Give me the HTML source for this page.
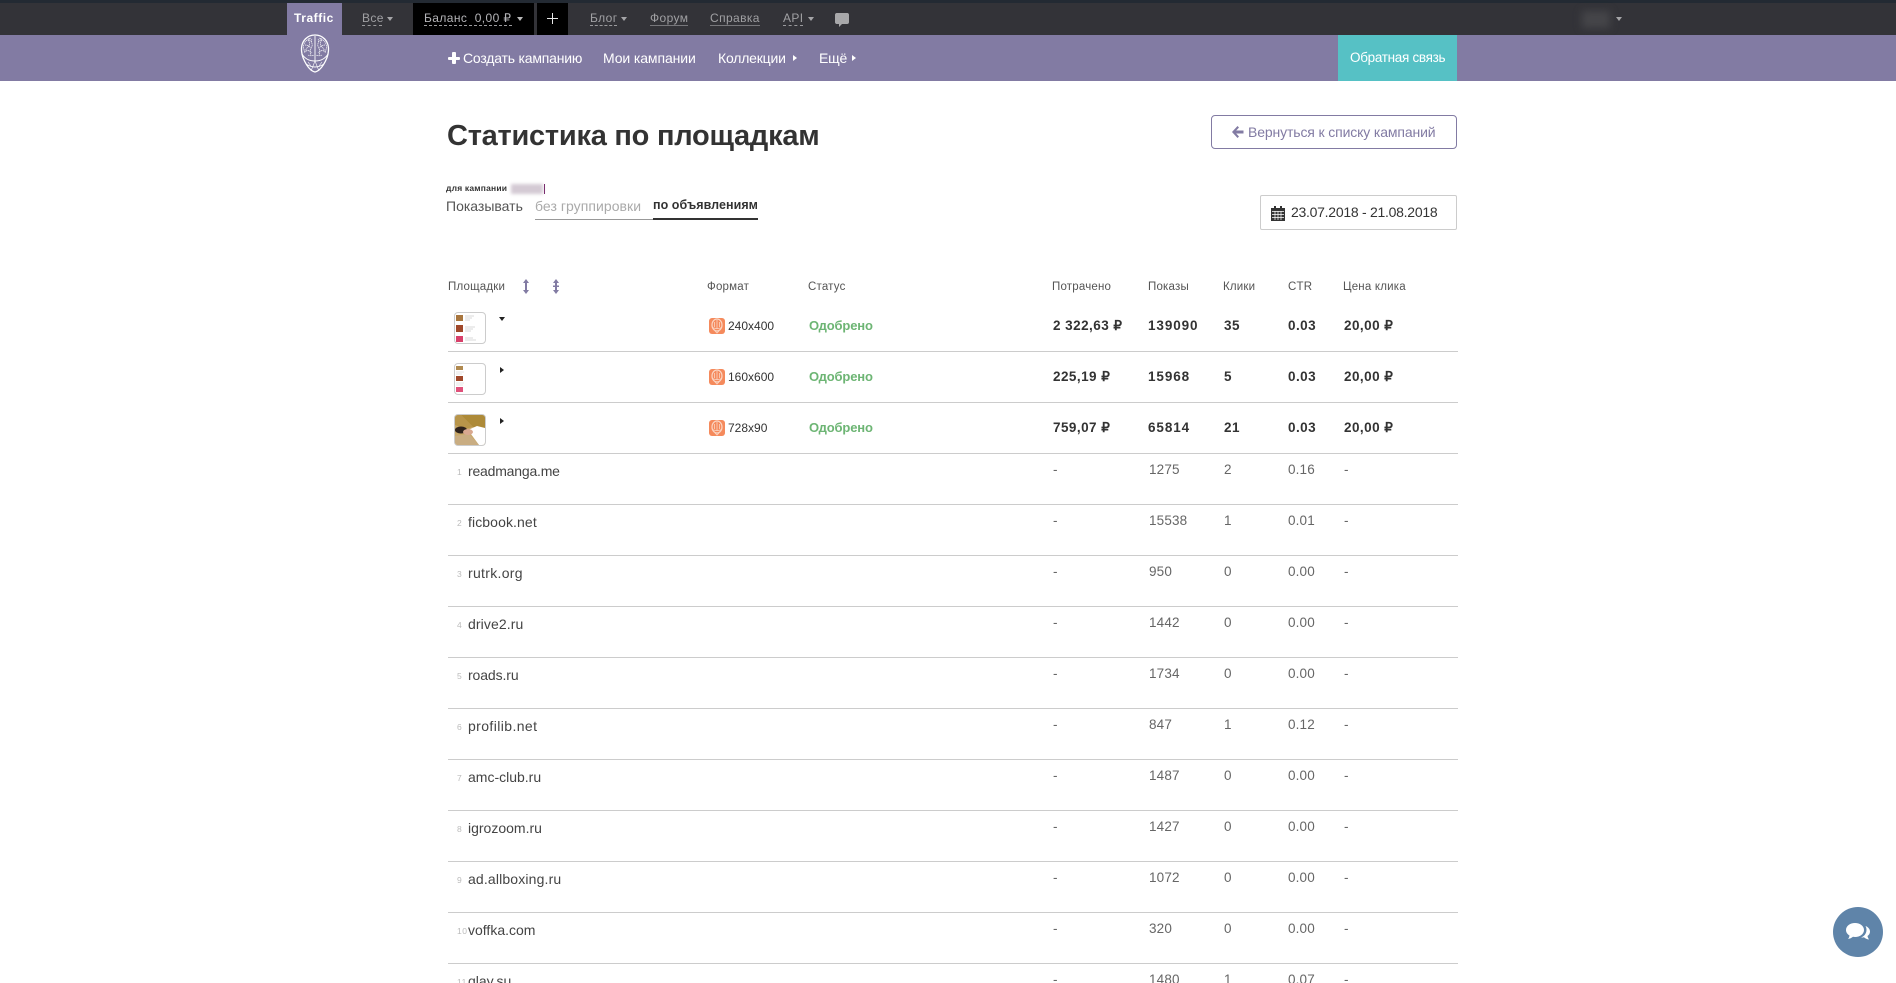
<!DOCTYPE html>
<html lang="ru"><head><meta charset="utf-8"><title>Статистика по площадкам</title>
<style>
html,body{margin:0;padding:0;background:#fff;width:1896px;height:983px;overflow:hidden}
body{position:relative;font-family:"Liberation Sans",sans-serif;color:#333}
.a,.t{position:absolute}
.t{white-space:nowrap;line-height:1}
#top{left:0;top:0;width:1896px;height:35px;background:#333338;border-top:3px solid #232a33;box-sizing:border-box}
#pur{left:0;top:35px;width:1896px;height:46px;background:#827ba3}
.k{background:#000}
.tn{font-size:12px;color:#a0a0a3;top:12px;letter-spacing:.4px}
.d{height:0;top:25px;border-bottom:1px dashed #9a9a9d}
.s{height:0;top:25px;border-bottom:1px solid #77777b}
.ar{width:0;height:0;border-left:3px solid transparent;border-right:3px solid transparent;border-top:4px solid #a5a5a8}
.ra{width:0;height:0;border-top:3.5px solid transparent;border-bottom:3.5px solid transparent;border-left:4px solid #fff;top:55px}
.mn{font-size:14px;color:#fff;top:51px;letter-spacing:-.2px}
.h{font-size:11.5px;color:#555;top:282px;letter-spacing:.2px}
.r{position:absolute;left:0;width:1896px;height:51px}
.r:before{content:"";position:absolute;left:448px;width:1010px;top:0;height:1px;background:#ccc}
.r span{position:absolute;white-space:nowrap;line-height:1;top:10px;font-size:13.5px;color:#666;letter-spacing:.15px}
.r .n{left:468px;top:11px;font-size:14px;color:#444;letter-spacing:0}
.r .i{left:457px;top:15px;font-size:8.5px;color:#bbb;letter-spacing:.5px}
.c1{left:1053px}.c2{left:1149px}.c3{left:1224px}.c4{left:1288px}.c5{left:1344px}
.b{height:1px}
.b:before{display:none}
.r.b span{font-weight:bold;font-size:13.5px;color:#333;top:0;letter-spacing:.45px}
.r.b span.c2{letter-spacing:.9px;left:1148px}
.th{width:30px;height:30px;border:1px solid #ccc;border-radius:4px;overflow:hidden;background:#fff;left:454px}
.th svg{display:block;filter:blur(.35px)}
.fi{left:709px;width:16px;height:16px;background:#f58a5c;border-radius:3px}
.fi svg{display:block}
.ft{left:728px;font-size:12px;color:#333;letter-spacing:0}
.ok{left:809px;font-size:13px;font-weight:bold;color:#6db574;letter-spacing:-.15px}
</style></head><body>

<div class="a" id="top"></div>
<div class="a" id="pur"></div>

<div class="a" style="left:287px;top:3px;width:55px;height:32px;background:#827ba3"></div>
<div class="t" style="left:294px;top:12px;font-size:12px;font-weight:bold;color:#fff;letter-spacing:.55px">Traffic</div>

<div class="t tn" style="left:362px">Все</div><div class="a d" style="left:362px;width:20px"></div><div class="a ar" style="left:387px;top:17px"></div>

<div class="a k" style="left:413px;top:3px;width:121px;height:32px"></div>
<div class="t tn" style="left:424px;color:#b5b5b8">Баланс&nbsp; 0,00 ₽</div><div class="a d" style="left:424px;width:88px"></div><div class="a ar" style="left:517px;top:17px;border-top-color:#bbb"></div>
<div class="a k" style="left:537px;top:3px;width:31px;height:32px"></div>
<div class="a" style="left:547px;top:18px;width:11px;height:1px;background:#e8e8e8"></div><div class="a" style="left:552px;top:13px;width:1px;height:11px;background:#e8e8e8"></div>

<div class="t tn" style="left:590px">Блог</div><div class="a d" style="left:590px;width:27px"></div><div class="a ar" style="left:621px;top:17px"></div>
<div class="t tn" style="left:650px">Форум</div><div class="a s" style="left:650px;width:38px"></div>
<div class="t tn" style="left:710px">Справка</div><div class="a s" style="left:710px;width:50px"></div>
<div class="t tn" style="left:783px">API</div><div class="a d" style="left:783px;width:20px"></div><div class="a ar" style="left:808px;top:17px"></div>
<svg class="a" style="left:834px;top:13px" width="16" height="14" viewBox="0 0 16 14"><path d="M2.500 0h11A2 2 0 0 1 15 2v7a2 2 0 0 1-2 2H8l-3 3v-3H2.500A2 2 0 0 1 1 9V2A2 2 0 0 1 2.500 0z" fill="#a8a8aa"/></svg>

<div class="a" style="left:1582px;top:11px;width:28px;height:17px;background:#454549;filter:blur(4px)"></div>
<div class="a ar" style="left:1616px;top:17px"></div>

<svg class="a" style="left:299px;top:33px" width="32" height="41" viewBox="0 0 32 41" fill="none" stroke="#fff" stroke-width="1">
<path d="M16 2C8 2 3 8 2.500 15c-.3 5 1 9 3 13 2.500 5 6 10 10.500 11 4.500-1 8-6 10.500-11 2-4 3.300-8 3-13C29 8 24 2 16 2z" stroke-width="1.300"/>
<path d="M3 21c3 5 8 7 13 7s10-2 13-7M7 31c3 2 6 3 9 3s6-1 9-3M16 3v25" stroke-width=".9"/>
<path d="M12 5c-3 1-6 3-7 6s0 6 1 9M9 7c2 2 2 4 1 6s-4 2-3 6M13 6c-2 3 1 4 0 7s-3 4-1 9M6 12c2 0 4 1 6 3M7 18c2-1 4 0 6 2M10 5c0 2 1 3 3 4M20 5c3 1 6 3 7 6s0 6-1 9M23 7c-2 2-2 4-1 6s4 2 3 6M19 6c2 3-1 4 0 7s3 4 1 9M26 12c-2 0-4 1-6 3M25 18c-2-1-4 0-6 2M22 5c0 2-1 3-3 4M9 22c2 1 4 1 6 0M23 22c-2 1-4 1-6 0" stroke-width=".65" stroke-dasharray="1.600 .5"/>
<path d="M16 28L12 38M16 28l4 10M9 29l3 4M23 29l-3 4" stroke-width=".6"/>
</svg>

<div class="a" style="left:448px;top:56.500px;width:12px;height:3.500px;background:#fff;border-radius:1px"></div><div class="a" style="left:452.200px;top:52px;width:3.500px;height:12px;background:#fff;border-radius:1px"></div>
<div class="t mn" style="left:463px">Создать кампанию</div>
<div class="t mn" style="left:603px;letter-spacing:-.1px">Мои кампании</div>
<div class="t mn" style="left:718px">Коллекции</div><div class="a ra" style="left:793px"></div>
<div class="t mn" style="left:819px">Ещё</div><div class="a ra" style="left:852px"></div>

<div class="a" style="left:1338px;top:35px;width:119px;height:46px;background:#56c1c5"></div>
<div class="t" style="left:1350px;top:51px;font-size:13.500px;color:#fff;letter-spacing:-.3px">Обратная связь</div>

<div class="t" style="left:447px;top:122px;font-size:29px;font-weight:bold;color:#333;letter-spacing:-.25px">Статистика по площадкам</div>

<div class="a" style="left:1211px;top:115px;width:246px;height:34px;box-sizing:border-box;border:1px solid #827ba3;border-radius:4px"></div>
<svg class="a" style="left:1231px;top:125px" width="13" height="14" viewBox="0 0 13 14"><path d="M6.500 1L1 7l5.500 6 1.500-1.500L5.200 8.500H12.500v-3H5.200L8 2.500z" fill="#827ba3"/></svg>
<div class="t" style="left:1248px;top:125px;font-size:14px;color:#827ba3;letter-spacing:-.13px">Вернуться к списку кампаний</div>

<div class="t" style="left:446px;top:184px;font-size:8.500px;font-weight:bold;color:#333;letter-spacing:.2px">для кампании</div>
<div class="a" style="left:511px;top:184px;width:32px;height:10px;background:#d4cad4;filter:blur(1.500px)"></div>
<div class="a" style="left:544px;top:184px;width:1px;height:10px;background:#7a2c6e"></div>

<div class="t" style="left:446px;top:199px;font-size:14px;color:#555">Показывать</div>
<div class="t" style="left:535px;top:199px;font-size:14px;color:#aaa;letter-spacing:.05px">без группировки</div>
<div class="t" style="left:653px;top:199px;font-size:12.500px;font-weight:bold;color:#333;letter-spacing:.05px">по объявлениям</div>
<div class="a" style="left:535px;top:219px;width:118px;height:1px;background:#999"></div>
<div class="a" style="left:653px;top:218px;width:105px;height:2px;background:#333"></div>

<div class="a" style="left:1260px;top:195px;width:197px;height:35px;box-sizing:border-box;border:1px solid #ccc;border-radius:2px"></div>
<svg class="a" style="left:1271px;top:206px" width="14" height="15" viewBox="0 0 14 15"><path d="M3 0h2v2h4V0h2v2h3v13H0V2h3z" fill="#333"/><path d="M1 5.500h12M1 8.500h12M1 11.500h12M4 5v9M7 5v9M10 5v9" stroke="#fff" stroke-width=".7"/></svg>
<div class="t" style="left:1291px;top:205px;font-size:14px;color:#333;letter-spacing:-.27px">23.07.2018 - 21.08.2018</div>

<div class="t h" style="left:448px">Площадки</div>
<svg class="a" style="left:522px;top:279px" width="8" height="15" viewBox="0 0 8 15" fill="#827ba3"><path d="M4 0l3 4H5v7h2l-3 4-3-4h2V4H1z"/></svg>
<svg class="a" style="left:552px;top:279px" width="8" height="15" viewBox="0 0 8 15" fill="#827ba3"><path d="M4 0l3 4H5v2.500H7v1.500H5v3h2l-3 4-3-4h2V8H1V6.500h2V4H1z"/></svg>
<div class="t h" style="left:707px">Формат</div>
<div class="t h" style="left:808px">Статус</div>
<div class="t h" style="left:1052px">Потрачено</div>
<div class="t h" style="left:1148px">Показы</div>
<div class="t h" style="left:1223px">Клики</div>
<div class="t h" style="left:1288px">CTR</div>
<div class="t h" style="left:1343px">Цена клика</div>

<div class="a th" style="top:312px">
<svg width="30" height="30" viewBox="0 0 30 30"><rect x="1" y="2" width="7" height="6" fill="#a8763e"/><rect x="1" y="12" width="7" height="7" fill="#a0482a"/><rect x="1" y="23" width="7" height="6" fill="#d8406a"/><path d="M10 3h9M10 5h7M10 7h5M10 14h10M10 16h8M10 18h6M10 25h8M10 27h11" stroke="#ccc" stroke-width=".8"/></svg></div>
<div class="a th" style="top:363px">
<svg width="30" height="30" viewBox="0 0 30 30"><rect x="1" y="2" width="7" height="4" fill="#b08a50"/><rect x="1" y="12" width="7" height="5" fill="#a0482a"/><rect x="1" y="23" width="7" height="5" fill="#e0507a"/><path d="M1 8h8M1 10h6M1 19h8M1 21h7" stroke="#ddd" stroke-width=".8"/></svg></div>
<div class="a th" style="top:414px;background:#c8a76c">
<svg width="30" height="30" viewBox="0 0 30 30"><rect width="30" height="30" fill="#c9a96a"/><path d="M0 0h30v14L18 12 6 0z" fill="#ad8a38"/><path d="M0 0l6 0 12 12-8 2-10-4z" fill="#b8954a"/><path d="M13 15l9-4 8 2v17h-6z" fill="#fff"/><path d="M0 21l14-2 10 11H0z" fill="#c9ad82"/><ellipse cx="6" cy="15" rx="6" ry="3.500" fill="#2e221c"/><ellipse cx="13" cy="17" rx="5" ry="3" fill="#d8a890"/></svg></div>

<div class="a" style="left:499px;top:317px;width:0;height:0;border-left:3.500px solid transparent;border-right:3.500px solid transparent;border-top:4px solid #222"></div>
<div class="a" style="left:500px;top:367px;width:0;height:0;border-top:3.500px solid transparent;border-bottom:3.500px solid transparent;border-left:4px solid #222"></div>
<div class="a" style="left:500px;top:418px;width:0;height:0;border-top:3.500px solid transparent;border-bottom:3.500px solid transparent;border-left:4px solid #222"></div>

<div class="a fi" style="top:318px"><svg width="16" height="16" viewBox="0 0 16 16" fill="none" stroke="#fbd6c4"><ellipse cx="8" cy="7" rx="5" ry="6" stroke-width="1.200"/><path d="M3 9c2 2 8 2 10 0M8 2v9M5.500 4v5M10.500 4v5M6 13l2 2 2-2" stroke-width=".8"/></svg></div>
<div class="t ft" style="top:320px">240x400</div>
<div class="t ok" style="top:319px">Одобрено</div>
<div class="a fi" style="top:369px"><svg width="16" height="16" viewBox="0 0 16 16" fill="none" stroke="#fbd6c4"><ellipse cx="8" cy="7" rx="5" ry="6" stroke-width="1.200"/><path d="M3 9c2 2 8 2 10 0M8 2v9M5.500 4v5M10.500 4v5M6 13l2 2 2-2" stroke-width=".8"/></svg></div>
<div class="t ft" style="top:371px">160x600</div>
<div class="t ok" style="top:370px">Одобрено</div>
<div class="a fi" style="top:420px"><svg width="16" height="16" viewBox="0 0 16 16" fill="none" stroke="#fbd6c4"><ellipse cx="8" cy="7" rx="5" ry="6" stroke-width="1.200"/><path d="M3 9c2 2 8 2 10 0M8 2v9M5.500 4v5M10.500 4v5M6 13l2 2 2-2" stroke-width=".8"/></svg></div>
<div class="t ft" style="top:422px">728x90</div>
<div class="t ok" style="top:421px">Одобрено</div>

<div class="r b" style="top:319px"><span class="c1">2 322,63 ₽</span><span class="c2">139090</span><span class="c3">35</span><span class="c4">0.03</span><span class="c5">20,00 ₽</span></div>
<div class="r b" style="top:370px"><span class="c1">225,19 ₽</span><span class="c2">15968</span><span class="c3">5</span><span class="c4">0.03</span><span class="c5">20,00 ₽</span></div>
<div class="r b" style="top:421px"><span class="c1">759,07 ₽</span><span class="c2">65814</span><span class="c3">21</span><span class="c4">0.03</span><span class="c5">20,00 ₽</span></div>

<div class="a" style="left:448px;top:351px;width:1010px;height:1px;background:#ccc"></div>
<div class="a" style="left:448px;top:402px;width:1010px;height:1px;background:#ccc"></div>

<div class="r" style="top:453px"><span class="i">1</span><span class="n" style="letter-spacing:-.2px">readmanga.me</span><span class="c1">-</span><span class="c2">1275</span><span class="c3">2</span><span class="c4">0.16</span><span class="c5">-</span></div>
<div class="r" style="top:504px"><span class="i">2</span><span class="n" style="letter-spacing:.1px">ficbook.net</span><span class="c1">-</span><span class="c2">15538</span><span class="c3">1</span><span class="c4">0.01</span><span class="c5">-</span></div>
<div class="r" style="top:555px"><span class="i">3</span><span class="n" style="letter-spacing:.3px">rutrk.org</span><span class="c1">-</span><span class="c2">950</span><span class="c3">0</span><span class="c4">0.00</span><span class="c5">-</span></div>
<div class="r" style="top:606px"><span class="i">4</span><span class="n" style="letter-spacing:.1px">drive2.ru</span><span class="c1">-</span><span class="c2">1442</span><span class="c3">0</span><span class="c4">0.00</span><span class="c5">-</span></div>
<div class="r" style="top:657px"><span class="i">5</span><span class="n" style="letter-spacing:-.1px">roads.ru</span><span class="c1">-</span><span class="c2">1734</span><span class="c3">0</span><span class="c4">0.00</span><span class="c5">-</span></div>
<div class="r" style="top:708px"><span class="i">6</span><span class="n" style="letter-spacing:.4px">profilib.net</span><span class="c1">-</span><span class="c2">847</span><span class="c3">1</span><span class="c4">0.12</span><span class="c5">-</span></div>
<div class="r" style="top:759px"><span class="i">7</span><span class="n">amc-club.ru</span><span class="c1">-</span><span class="c2">1487</span><span class="c3">0</span><span class="c4">0.00</span><span class="c5">-</span></div>
<div class="r" style="top:810px"><span class="i">8</span><span class="n">igrozoom.ru</span><span class="c1">-</span><span class="c2">1427</span><span class="c3">0</span><span class="c4">0.00</span><span class="c5">-</span></div>
<div class="r" style="top:861px"><span class="i">9</span><span class="n" style="letter-spacing:.15px">ad.allboxing.ru</span><span class="c1">-</span><span class="c2">1072</span><span class="c3">0</span><span class="c4">0.00</span><span class="c5">-</span></div>
<div class="r" style="top:912px"><span class="i">10</span><span class="n">voffka.com</span><span class="c1">-</span><span class="c2">320</span><span class="c3">0</span><span class="c4">0.00</span><span class="c5">-</span></div>
<div class="r" style="top:963px"><span class="i">11</span><span class="n">qlay.su</span><span class="c1">-</span><span class="c2">1480</span><span class="c3">1</span><span class="c4">0.07</span><span class="c5">-</span></div>

<div class="a" style="left:1833px;top:907px;width:50px;height:50px;border-radius:50%;background:#5f84a9"></div>
<svg class="a" style="left:1846px;top:923px" width="25" height="20" viewBox="0 0 25 20"><path d="M9 0c5 0 9 3 9 7s-4 7-9 7c-.7 0-1.400 0-2-.2C5.500 15 4 15.700 2 16c.8-1 1.300-2 1.500-3.500C1.300 11.200 0 9.200 0 7c0-4 4-7 9-7z" fill="#fff"/><path d="M19.500 3c2.500 1 4.500 3 4.500 5.500 0 2-1 3.500-2.500 4.500.2 1.300.8 2.400 1.500 3.500-2-.3-3.700-1-5-2.300-1 .3-2 .4-3 .3 3-1 5.500-4 5.500-7.500 0-1.500-.3-2.700-1-4z" fill="#fff"/></svg>

</body></html>
